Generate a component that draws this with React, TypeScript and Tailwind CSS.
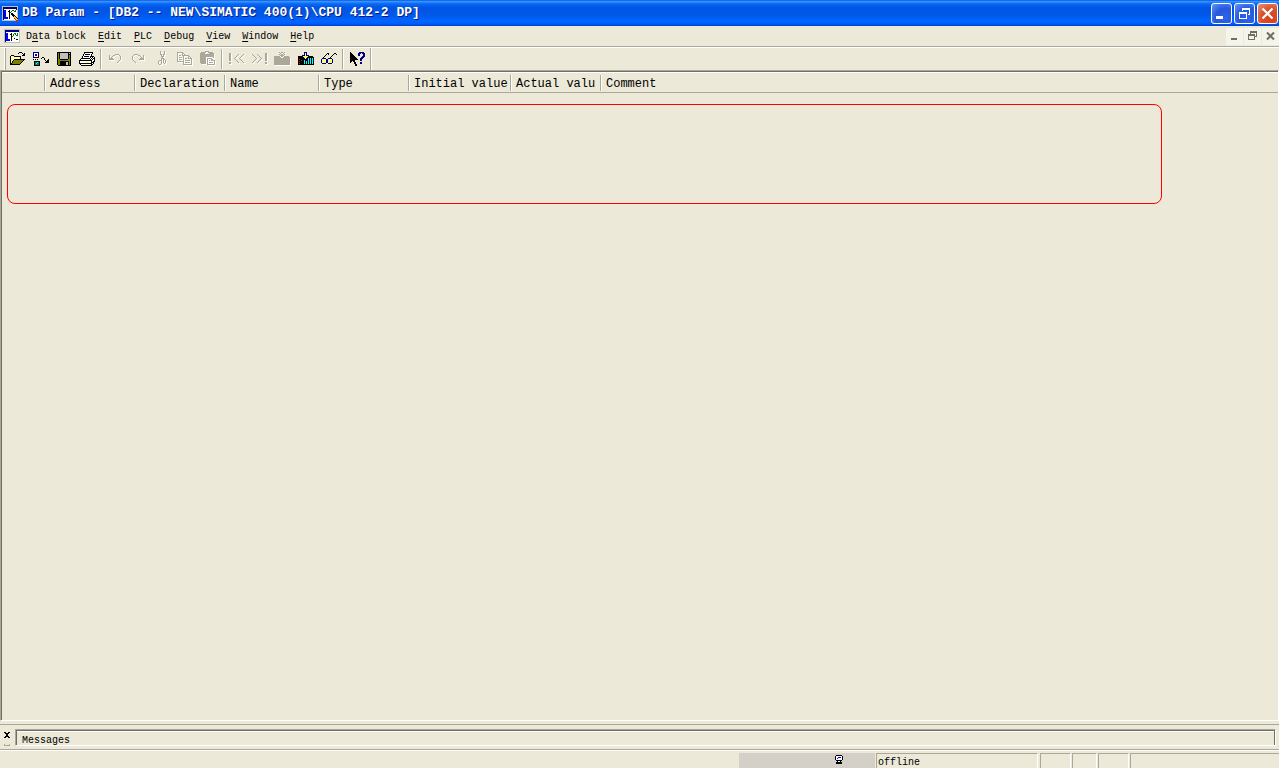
import React from "react";

const COLORS: Record<string, string> = {
  K: "#000000",
  W: "#ffffff",
  Y: "#ffff66",
  O: "#808000",
  G: "#c0c0c0",
  D: "#aca899",
  B: "#0000ff",
  N: "#000080",
  C: "#00ffff",
  T: "#008080",
  R: "#ff0000",
  L: "#008000",
  S: "#808080",
  F: "#ffcc33",
};

function runs(rows: string[], dx: number, tint?: string) {
  const out: React.ReactElement[] = [];
  rows.forEach((row, y) => {
    let x = 0;
    while (x < row.length) {
      const c = row[x];
      let end = x + 1;
      while (end < row.length && row[end] === c) end++;
      if (c !== "." && COLORS[c]) {
        out.push(
          <rect
            key={`${dx}-${x}-${y}`}
            x={x + dx}
            y={y + dx}
            width={end - x}
            height={1}
            fill={tint ?? COLORS[c]}
          />
        );
      }
      x = end;
    }
  });
  return out;
}

function Sprite({ rows, etched = false }: { rows: string[]; etched?: boolean }) {
  const extra = etched ? 1 : 0;
  const w = Math.max(...rows.map((r) => r.length)) + extra;
  const h = rows.length + extra;
  return (
    <svg width={w} height={h} viewBox={`0 0 ${w} ${h}`} shapeRendering="crispEdges" aria-hidden="true" className="block shrink-0">
      {etched && runs(rows, 1, "#ffffff")}
      {runs(rows, 0)}
    </svg>
  );
}

const APP = [
  "GGGGGGGGGGGGGGGG",
  "GNNNNNNNNNNNNNNG",
  "GNNNNNNNNNNNNNNG",
  "GNWWWWWWWWWWWWNG",
  "GNBBWWWKWWLLWLWG",
  "GNBBWWKKWLWWLLWG",
  "GNBBWWWKLWWWWWWG",
  "GNBBWWWKWKKWWWWG",
  "GNBBWWWKWKKKWWWG",
  "GNBBWWWKWWKKKWWG",
  "GNBBWWWKWWWKFKWG",
  "GNBBBBWKWWWWFFKG",
  "GNBBBBWKWWWWRFFK",
  "GNWWWWWWWWWWWRFF",
  "GGGGGGGGGGGGGGRR",
];

const DOC = [
  "GGGGGGGGGGGGGGGG",
  "GNNNNNNNNNNNNNNG",
  "GNNNNNNNNNNNNNNG",
  "GNWWWWWWWWWWWWWG",
  "GNBBWWWKWWLLWLWG",
  "GNBBWWKKWLWLWLWG",
  "GNBBWWWKWLWWLLWG",
  "GNBBWWWKLWWWWWWG",
  "GNBBWWWKWWWWWWWG",
  "GNBBWWWKWWKWWWWG",
  "GNBBBBWKWWWWKKWG",
  "GNBBBBWKWWWWWWWG",
  "GNWWWWWWWWWWWWWG",
  "GGGGGGGGGGGGGGGG",
];

const OPEN = [
  ".........KKK....",
  "........K...K.K.",
  ".............KK.",
  ".KKK........KKK.",
  "KYWYKKKKKKK.....",
  "KWYWYWYWYWK.....",
  "KYWYWYWYWYK.....",
  "KWYWKKKKKKKKKKK.",
  "KYWKOOOOOOOOOK..",
  "KWKOOOOOOOOOK...",
  "KYKOOOOOOOOK....",
  "KKOOOOOOOOK.....",
  "KKKKKKKKKK......",
];

const TRANSFER = [
  "NNNNNN..........",
  "NWWWWK..........",
  "NWBBWK..........",
  "NWBBWK..........",
  "NWWWWK..........",
  "NKKKKK...KK.....",
  "........K..K....",
  "K.K.K......K...K",
  "............K.KK",
  ".KKKKKK......KKK",
  ".KTTCTK.....KKKK",
  ".KTCTTK.........",
  ".KTTTTK.........",
  ".KKKKKK.........",
];

const SAVE = [
  "KKKKKKKKKKKKKK",
  "KOKGGGGGGGGKGK",
  "KOKGGGGGGGGKKK",
  "KOKGGGGGGGGKOK",
  "KOKGGGGGGGGKOK",
  "KOKGGGGGGGGKOK",
  "KOKGGGGGGGGKOK",
  "KOOKKKKKKKKOOK",
  "KOOOOOOOOOOOOK",
  "KOOKKKKKKKKKOK",
  "KOOKKKKKKGGKOK",
  "KOOKKKKKKGGKOK",
  "KOOKKKKKKGGKOK",
  ".KKKKKKKKKKKKK",
];

const PRINT = [
  ".....KKKKKKKKK..",
  ".....KWWWWWWWK..",
  "....KWKKKKKWK...",
  "....KWWWWWWWK...",
  "...KWKKKKKWKKKK.",
  "...KWWWWWWWKWKWK",
  "..KKKKKKKKKWKWKK",
  ".KWWWWWWWWWKWKWK",
  "KKKKKKKKKKKKKWWK",
  "KWWWWWWWWWWWKWKK",
  "KWWWWWWYYYWWKKK.",
  "KKKKKKKKKKKKKWK.",
  ".KWWWWWWWWWWKK..",
  "..KKKKKKKKKKK...",
];

const UNDO = [
  "......DDDD..",
  "D...DD....D.",
  "D..D.......D",
  "D.D........D",
  "DDDD.......D",
  "DDDDD......D",
  "..........D.",
  ".........D..",
  "........D...",
];

const REDO = UNDO.map((row) => row.split("").reverse().join(""));

const CUT = [
  "...D...D.",
  "...D...D.",
  "...D...D.",
  "...DD.DD.",
  "....D.D..",
  "....DDD..",
  ".....D...",
  "....DDD..",
  "....D.DD.",
  "..DDD.D.D",
  ".D..D.D.D",
  ".D..D.D.D",
  ".D..D..D.",
  "..DD.....",
];

const COPY = [
  "DDDDDD.........",
  "D....DD........",
  "D....D.D.......",
  "D.DD.DDDDDDD...",
  "D.....D....DD..",
  "D.DDD.D....D.D.",
  "D.....D.DD.DDDD",
  "D.DDD.D.......D",
  "D.....D.DDDDD.D",
  "DDDDDDD.......D",
  "......D.DDDDD.D",
  "......D.......D",
  "......DDDDDDDDD",
];

const PASTE = [
  ".....DDDD......",
  ".DDDDD..DDDDD..",
  "DDDDD....DDDDD.",
  "DDDDDDDDDDDDDD.",
  "DDDDDDDDDDDDDD.",
  "DDDDDDDDDDDDDD.",
  "DDDDDDWWWWWWWD.",
  "DDDDDDWDDDDDWW.",
  "DDDDDDWDWWWDDW.",
  "DDDDDDWDWDWDDDD",
  "DDDDDDWDWWWWWWD",
  "DDDDDDWDWDDDDWD",
  ".DDDDDWDWWWWWWD",
  ".......DDDDDDDD",
];

const PREVIOUS = [
  "DD.............",
  "DD.......D....D",
  "DD......D....D.",
  "DD.....D....D..",
  "DD....D....D...",
  "DD...D....D....",
  "DD....D....D...",
  "DD.....D....D..",
  "........D....D.",
  "DD.......D....D",
  "DD.............",
];

const NEXT = PREVIOUS.map((row) => row.split("").reverse().join(""));

const LOAD_OFF = [
  ".....D.DD.D.....",
  "......D..D......",
  ".....D.DD.D.....",
  "......DDDD......",
  "DDDDDDWDDWDDDDD.",
  "DDDDDDDWWDDDDDDD",
  "DDDDDDDDDDDDDDDD",
  "DDDDDDDDDDDDDDDD",
  "DDDDDDDDDDDDDDDD",
  "DDDDDDDDDDDDDDDD",
  "DDDDDDDDDDDDDDDD",
  "DDDDDDDDDDDDDDDD",
  "DDDDDDDDDDDDDDDD",
];

const LOAD = [
  "......NNN.......",
  "......NYN.......",
  "......NYN.......",
  "....NNNYNNN.....",
  "KKKKNYYYYYNKKKK.",
  "KKKKKNYYYNKKKKKK",
  "KKKKKKNYNKCKCKCK",
  "KRKKKKKNKKCKCKCK",
  "KKKLKKCKKKCKCKCK",
  "KRKKKKCKCKCKCKCK",
  "KKKKKKCKCKCKCKCK",
  "KRKKKKCKCKCKCKCK",
  "KKKKKKKKKKKKKKKK",
];

const GLASSES = [
  "......KK.....KK.",
  ".....K.K....K..K",
  "....K......K....",
  "...K......K.....",
  "..K......K......",
  ".NNNN..NNNN.....",
  "N..YYNN..YYN....",
  "N.YYYNN.YYYN....",
  "NYYYYNNYYYYN....",
  "NYYY.NNYYY.N....",
  ".NNNN..NNNN.....",
];

const CONTEXT_HELP = [
  "K........NNNNN..",
  "KK......NNN.NNN.",
  "KKK.....NN...NN.",
  "KKKK....NN...NN.",
  "KKKKK.......NNN.",
  "KKKKKK.....NNN..",
  "KKKKKKK...NNN...",
  "KKKKKKKK..NN....",
  "KKKKK.....NN....",
  "KK.KK...........",
  "K...KK....NN....",
  "....KK....NN....",
  ".....KK.........",
  ".....KK.........",
];

const STATION = [
  ".KKKKKK.",
  "KWWWWWWK",
  "KWWBBBWK",
  "KWBWWWWK",
  "KWWWWWWK",
  ".KKKKKK.",
  "..KWWK..",
  ".KKKKKK.",
  ".KKKKKK.",
];

type Tool = { label: string; rows: string[]; off?: boolean };

const TOOL_GROUPS: Tool[][] = [
  [
    { label: "Open", rows: OPEN },
    { label: "Open online", rows: TRANSFER },
    { label: "Save", rows: SAVE },
    { label: "Print", rows: PRINT },
  ],
  [
    { label: "Undo", rows: UNDO, off: true },
    { label: "Redo", rows: REDO, off: true },
    { label: "Cut", rows: CUT, off: true },
    { label: "Copy", rows: COPY, off: true },
    { label: "Paste", rows: PASTE, off: true },
  ],
  [
    { label: "Previous error", rows: PREVIOUS, off: true },
    { label: "Next error", rows: NEXT, off: true },
    { label: "Download parameters", rows: LOAD_OFF, off: true },
    { label: "Download", rows: LOAD },
    { label: "Monitor", rows: GLASSES },
  ],
  [{ label: "Context help", rows: CONTEXT_HELP }],
];

const MENUS: [string, string, string][] = [
  ["D", "a", "ta block"],
  ["", "E", "dit"],
  ["", "P", "LC"],
  ["", "D", "ebug"],
  ["", "V", "iew"],
  ["", "W", "indow"],
  ["", "H", "elp"],
];

const COLUMNS = [
  { name: "", width: "w-[44px]" },
  { name: "Address", width: "w-[90px]" },
  { name: "Declaration", width: "w-[90px]" },
  { name: "Name", width: "w-[94px]" },
  { name: "Type", width: "w-[90px]" },
  { name: "Initial value", width: "w-[102px]" },
  { name: "Actual valu", width: "w-[90px]" },
  { name: "Comment", width: "" },
];

function MinimizeGlyph() {
  return (
    <svg width="19" height="19" viewBox="0 0 19 19" shapeRendering="crispEdges" aria-hidden="true">
      <rect x="4" y="12" width="7" height="3" fill="currentColor" />
    </svg>
  );
}

function RestoreGlyph() {
  return (
    <svg width="19" height="19" viewBox="0 0 19 19" shapeRendering="crispEdges" aria-hidden="true">
      <path d="M7 4h8v7h-2v-1h1V6H8v1H7zM4 8h8v7H4zM5 10v4h6v-4z" fill="currentColor" fillRule="evenodd" />
    </svg>
  );
}

function CloseGlyph() {
  return (
    <svg width="19" height="19" viewBox="0 0 19 19" aria-hidden="true">
      <path d="M4.500 4.500l10 10M14.500 4.500l-10 10" stroke="currentColor" strokeWidth="2.2" />
    </svg>
  );
}

function ToolDivider() {
  return (
    <div className="flex w-1.5 items-center pl-0.5">
      <div className="h-5 w-0.5 border-l border-r border-l-[#aca899] border-r-white" />
    </div>
  );
}

export default function App() {
  const caption =
    "flex h-[21px] w-[21px] items-center justify-center rounded-[3px] border border-white text-white";
  const child = "flex h-[17px] w-[17px] items-center justify-center bg-[#f5f4ea] text-[#716f64]";
  const cell = "h-full border-t border-l border-r border-t-[#aca899] border-l-[#aca899] border-r-white";

  return (
    <div className="flex min-h-screen flex-col overflow-hidden bg-[#ece9d8] font-['Liberation_Mono','Noto_Sans_CJK_SC',monospace] text-[10px] text-black">
      <header className="flex h-[26px] shrink-0 items-center bg-[linear-gradient(180deg,#0058e6_0%,#3a93ff_6%,#0a6cf5_14%,#0055e5_28%,#0057e8_55%,#0066ff_80%,#0060fc_90%,#003fd0_100%)] pr-px pl-0.5">
        <Sprite rows={APP} />
        <h1 className="ml-1 flex-1 truncate text-[13px] leading-5 font-bold text-white [text-shadow:1px_1px_0_#0a1883]">
          DB Param - [DB2 -- NEW\SIMATIC 400(1)\CPU 412-2 DP]
        </h1>
        <div className="flex gap-0.5">
          <button aria-label="Minimize" className={`${caption} bg-[radial-gradient(circle_at_70%_75%,#2f62e8,#2459dd_50%,#6a94f5)]`}>
            <MinimizeGlyph />
          </button>
          <button aria-label="Restore" className={`${caption} bg-[radial-gradient(circle_at_70%_75%,#2f62e8,#2459dd_50%,#6a94f5)]`}>
            <RestoreGlyph />
          </button>
          <button aria-label="Close" className={`${caption} bg-[radial-gradient(circle_at_70%_75%,#d8401a,#d9502c_50%,#f0937a)]`}>
            <CloseGlyph />
          </button>
        </div>
      </header>

      <nav className="flex h-5 shrink-0 items-center pl-1" aria-label="Menu">
        <Sprite rows={DOC} />
        <div className="flex flex-1 pt-0.5">
          {MENUS.map(([before, key, after]) => (
            <button key={key + after} className="px-1.5 leading-4">
              {before}
              <span className="underline underline-offset-2">{key}</span>
              {after}
            </button>
          ))}
        </div>
        <div className="flex gap-px">
          <button aria-label="Minimize document" className={child}>
            <svg width="17" height="17" shapeRendering="crispEdges" aria-hidden="true">
              <rect x="5" y="10" width="6" height="2" fill="currentColor" />
            </svg>
          </button>
          <button aria-label="Restore document" className={child}>
            <svg width="17" height="17" shapeRendering="crispEdges" aria-hidden="true">
              <path d="M6 3h7v6h-2V8h1V5H7v1H6zM4 6h7v6H4zM5 8v3h5V8z" fill="currentColor" fillRule="evenodd" />
            </svg>
          </button>
          <button aria-label="Close document" className={child}>
            <svg width="17" height="17" aria-hidden="true">
              <path d="M5 4.500l7 7M12 4.500l-7 7" stroke="currentColor" strokeWidth="2" />
            </svg>
          </button>
        </div>
      </nav>

      <div className="flex h-6 shrink-0 border-t border-[#aca899]" role="toolbar" aria-label="Standard">
        <div className="flex flex-1 border-t border-white">
          <div className="ml-1 w-0.5 border-r border-l border-r-[#aca899] border-l-white" />
          {TOOL_GROUPS.map((group, i) => (
            <React.Fragment key={i}>
              {i > 0 && <ToolDivider />}
              {group.map((tool) => (
                <button
                  key={tool.label}
                  aria-label={tool.label}
                  disabled={tool.off}
                  className="flex w-[23px] items-center justify-center pb-px"
                >
                  <Sprite rows={tool.rows} etched={tool.off} />
                </button>
              ))}
            </React.Fragment>
          ))}
          <div className="ml-px w-0.5 border-l border-r border-l-[#aca899] border-r-white" />
        </div>
      </div>

      <main className="flex flex-1 flex-col border-t border-r border-b border-l border-t-[#aca899] border-r-white border-b-white border-l-[#aca899]">
        <div className="flex-1 border-t border-l border-[#716f64]">
          <table className="w-full table-fixed border-collapse">
            <colgroup>
              {COLUMNS.map((c) => (
                <col key={c.name} className={c.width} />
              ))}
            </colgroup>
            <thead>
              <tr className="h-5 border-t border-b border-t-white border-b-[#aca899]">
                {COLUMNS.map((c, i) => (
                  <th key={c.name} scope="col" className="p-0 text-left text-[12px] font-normal">
                    <div
                      className={
                        i < COLUMNS.length - 1
                          ? "h-4 overflow-hidden border-r border-white"
                          : "h-4 overflow-hidden"
                      }
                    >
                      <div
                        className={
                          i < COLUMNS.length - 1
                            ? "h-4 border-r border-[#aca899] pt-px pl-1 leading-4 whitespace-nowrap"
                            : "h-4 pt-px pl-1 leading-4 whitespace-nowrap"
                        }
                      >
                        {c.name}
                      </div>
                    </div>
                  </th>
                ))}
              </tr>
            </thead>
          </table>
          <section
            aria-label="Parameters"
            className="mt-[11px] mr-[116px] ml-[5px] h-[100px] rounded-[8px] border border-[#ff0000]"
          />
        </div>
      </main>

      <section className="mt-[3px] flex h-[26px] shrink-0 border-t border-b border-[#aca899]" aria-label="Messages">
        <div className="flex w-[15px] flex-col items-start pt-[7px] pl-1">
          <button aria-label="Close messages" className="block">
            <svg width="6" height="6" viewBox="0 0 6 6" shapeRendering="crispEdges" aria-hidden="true">
              <path d="M0 0h2v1h2V0h2v1H5v1H4v2h1v1h1v1H4V5H2v1H0V5h1V4h1V2H1V1H0z" fill="#000" />
            </svg>
          </button>
          <svg width="6" height="2" className="mt-1.5" shapeRendering="crispEdges" aria-hidden="true">
            <path d="M0 1h6M0 0h1M5 0h1" stroke="#aca899" strokeWidth="1" />
          </svg>
        </div>
        <div className="mt-1 mr-[3px] mb-[3px] flex-1 border border-t-[#aca899] border-r-white border-b-white border-l-[#aca899]">
          <div className="h-full overflow-hidden border-t border-r border-l border-[#716f64]">
            <div className="border-t border-white pt-px pl-[5px] leading-4">Messages</div>
          </div>
        </div>
      </section>

      <footer className="flex h-[18px] shrink-0 border-t border-white pt-0.5">
        <div className="flex-1" />
        <div className="mr-px flex h-full w-[136px] items-start justify-end bg-[#d4d0c8] pt-0.5 pr-8">
          <Sprite rows={STATION} />
        </div>
        <div className={`${cell} w-[162px] pt-px pl-px leading-4`}>offline</div>
        <div className={`${cell} ml-0.5 w-[31px]`} />
        <div className={`${cell} ml-px w-[25px]`} />
        <div className={`${cell} ml-px w-[31px]`} />
        <div className="ml-px h-full w-[149px] border-t border-l border-[#aca899]" />
      </footer>
    </div>
  );
}
